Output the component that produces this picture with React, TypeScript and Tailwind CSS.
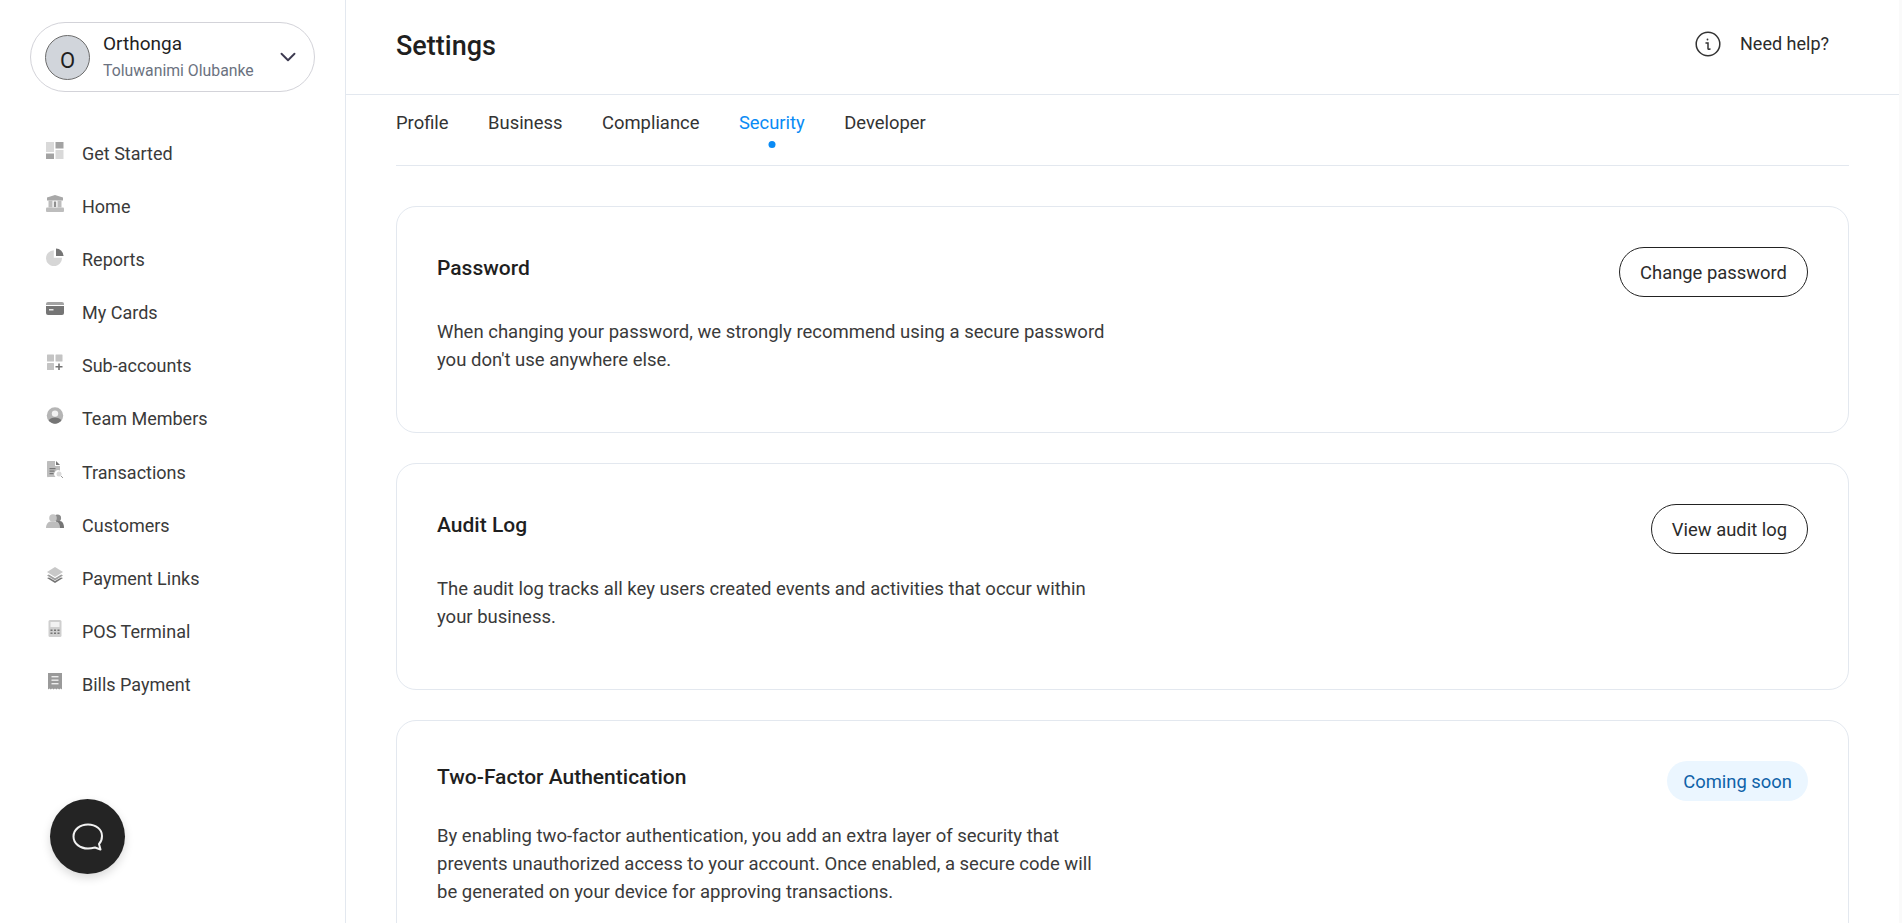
import { ChevronDown } from "lucide-react";

const navItems = [
  { label: "Get Started", icon: <GetStartedIcon /> },
  { label: "Home", icon: <HomeIcon /> },
  { label: "Reports", icon: <ReportsIcon /> },
  { label: "My Cards", icon: <CardIcon /> },
  { label: "Sub-accounts", icon: <SubAccountsIcon /> },
  { label: "Team Members", icon: <TeamIcon /> },
  { label: "Transactions", icon: <TransactionsIcon /> },
  { label: "Customers", icon: <CustomersIcon /> },
  { label: "Payment Links", icon: <LayersIcon /> },
  { label: "POS Terminal", icon: <PosIcon /> },
  { label: "Bills Payment", icon: <BillsIcon /> },
];

const tabs = ["Profile", "Business", "Compliance", "Security", "Developer"];

function GetStartedIcon() {
  return (
    <svg width="18" height="18" viewBox="0 0 18 18">
      <rect x="0" y="0" width="8" height="10" fill="#d9d9d9" />
      <rect x="9.5" y="0" width="8" height="6.5" fill="#a3a3a3" />
      <rect x="0" y="11.5" width="8" height="5.5" fill="#a3a3a3" />
      <rect x="9.5" y="8" width="8" height="9" fill="#d9d9d9" />
    </svg>
  );
}

function HomeIcon() {
  return (
    <svg width="18" height="18" viewBox="0 0 18 18">
      <path d="M9 0 17 2.5V5.5H1V2.5Z" fill="#a8a8a8" />
      <rect x="2.5" y="5.5" width="4" height="7" fill="#bdbdbd" />
      <rect x="7.8" y="6.5" width="2.4" height="5.5" fill="#8f8f8f" />
      <rect x="11.5" y="5.5" width="4" height="7" fill="#bdbdbd" />
      <rect x="0" y="12.5" width="18" height="4.5" rx="1" fill="#bdbdbd" />
    </svg>
  );
}

function ReportsIcon() {
  return (
    <svg width="18" height="18" viewBox="0 0 18 18">
      <path d="M7.8 2.2V9.8H16A8 8 0 1 1 7.8 2.2Z" fill="#d6d6d6" />
      <path d="M10 0.5A7.6 7.6 0 0 1 17.5 8H10Z" fill="#757575" />
    </svg>
  );
}

function CardIcon() {
  return (
    <svg width="18" height="18" viewBox="0 0 18 18">
      <path d="M2 1H16A2 2 0 0 1 18 3V4H0V3A2 2 0 0 1 2 1Z" fill="#a3a3a3" />
      <path d="M0 5H18V12A2 2 0 0 1 16 14H2A2 2 0 0 1 0 12Z" fill="#757575" />
      <rect x="3" y="8" width="4.5" height="1.5" fill="#e5e5e5" />
    </svg>
  );
}

function SubAccountsIcon() {
  return (
    <svg width="18" height="18" viewBox="0 0 18 18">
      <rect x="1" y="0.5" width="7" height="7" rx="0.5" fill="#c4c4c4" />
      <rect x="9.5" y="0.5" width="7" height="7" rx="0.5" fill="#c4c4c4" />
      <rect x="1" y="9" width="7" height="7" rx="0.5" fill="#c4c4c4" />
      <path d="M12.2 9.5H13.8V12H16.5V13.5H13.8V16H12.2V13.5H9.5V12H12.2Z" fill="#757575" />
    </svg>
  );
}

function TeamIcon() {
  return (
    <svg width="18" height="18" viewBox="0 0 18 18">
      <circle cx="9" cy="8.5" r="8.2" fill="#b5b5b5" />
      <circle cx="9" cy="6.6" r="3.2" fill="#f2f2f2" />
      <path d="M2.6 13.6C4 11 6.4 10.4 9 10.4S14 11 15.4 13.6A8.2 8.2 0 0 1 2.6 13.6Z" fill="#757575" />
    </svg>
  );
}

function TransactionsIcon() {
  return (
    <svg width="18" height="18" viewBox="0 0 18 18">
      <path d="M1.5 0H9V5H14V9.5A4 4 0 0 0 9.5 16H2.5A1 1 0 0 1 1 15V1A1 1 0 0 1 1.5 0Z" fill="#bdbdbd" />
      <path d="M10 0 14 4H10Z" fill="#757575" />
      <rect x="3.5" y="7" width="6" height="1.2" fill="#757575" />
      <rect x="3.5" y="9.5" width="5" height="1.2" fill="#757575" />
      <rect x="3.5" y="12" width="4" height="1.2" fill="#757575" />
      <circle cx="13" cy="13" r="2.5" fill="#d9d9d9" />
      <path d="M15 15 17 17" stroke="#9a9a9a" strokeWidth="1" />
    </svg>
  );
}

function CustomersIcon() {
  return (
    <svg width="18" height="18" viewBox="0 0 18 18">
      <circle cx="11.5" cy="4" r="3.6" fill="#8a8a8a" />
      <path d="M10 7H14C16.5 7 18 10 18 14H11Z" fill="#757575" />
      <circle cx="7" cy="4" r="3.8" fill="#c4c4c4" />
      <path d="M4.5 7.5H10C12.5 7.5 14 10.5 14 14H0C0 10.5 2 7.5 4.5 7.5Z" fill="#bdbdbd" />
    </svg>
  );
}

function LayersIcon() {
  return (
    <svg width="18" height="18" viewBox="0 0 18 18">
      <path d="M9 0 17 5 9 10 1 5Z" fill="#c8c8c8" />
      <path d="M1 8.5 2.8 7.4 9 11.2 15.2 7.4 17 8.5 9 13.5Z" fill="#a0a0a0" />
      <path d="M3 10.5 9 14 15 10.5 17 11 9 16 1 11Z" fill="#757575" />
    </svg>
  );
}

function PosIcon() {
  return (
    <svg width="18" height="18" viewBox="0 0 18 18">
      <rect x="2.5" y="0" width="13" height="17" rx="1.5" fill="#cfcfcf" />
      <rect x="4.5" y="2" width="9" height="5" fill="#f2f2f2" />
      <g fill="#757575">
        <rect x="4.5" y="9.5" width="2" height="1.5" />
        <rect x="8" y="9.5" width="2" height="1.5" />
        <rect x="11.5" y="9.5" width="2" height="1.5" />
        <rect x="4.5" y="12.5" width="2" height="1.5" />
        <rect x="8" y="12.5" width="2" height="1.5" />
        <rect x="11.5" y="12.5" width="2" height="1.5" />
      </g>
    </svg>
  );
}

function BillsIcon() {
  return (
    <svg width="18" height="18" viewBox="0 0 18 18">
      <path d="M2 0H16V16.5L14.6 15.6 13.2 16.5 11.8 15.6 10.4 16.5 9 15.6 7.6 16.5 6.2 15.6 4.8 16.5 3.4 15.6 2 16.5Z" fill="#9a9a9a" />
      <rect x="5.5" y="3" width="7" height="1.4" fill="#ededed" />
      <rect x="5.5" y="6.5" width="7" height="1.4" fill="#ededed" />
      <rect x="5.5" y="10" width="7" height="1.4" fill="#ededed" />
    </svg>
  );
}

function Card({ title, text, action, height }: { title: string; text: string; action: React.ReactNode; height: string }) {
  return (
    <div className={`border border-[#e3e8ef] rounded-[20px] pl-[40px] pr-[40px] pt-[40px] shrink-0 ${height}`}>
      <div className="flex justify-between items-center">
        <h3 className="text-[21px] leading-[28px] pb-[8px] font-medium text-[#1f1f1f]">{title}</h3>
        {action}
      </div>
      <p className="text-[18.5px] leading-[28px] text-[#3a3a3a] max-w-[672px] mt-[21px]">{text}</p>
    </div>
  );
}

function OutlineButton({ label }: { label: string }) {
  return (
    <button className="h-[50px] px-5 pt-[1px] border border-[#222] rounded-full text-[18.4px] text-[#2b2b2b] bg-white">
      {label}
    </button>
  );
}

export default function App() {
  return (
    <div className="flex h-screen overflow-hidden bg-white font-['Roboto',sans-serif]">
      <aside className="relative w-[346px] shrink-0 border-r border-[#e3e8ef] pt-[22px] px-[30px]">
        <div className="flex items-center h-[70px] w-[285px] border border-[#d3d3d9] rounded-full pl-[14px] pr-[13px]">
          <div className="w-[45px] h-[45px] rounded-full bg-[#d1d5db] border border-[#6b6b6b] flex items-center justify-center text-[22px] text-[#1f1f1f] pt-[6px]">
            O
          </div>
          <div className="ml-[13px] flex-1">
            <div className="text-[19px] leading-[22px] text-[#1f1f1f]">Orthonga</div>
            <div className="text-[15.8px] leading-[20px] mt-[6px] text-[#6b7280]">Toluwanimi Olubanke</div>
          </div>
          <ChevronDown size={26} strokeWidth={1.75} className="text-[#3d3a50]" />
        </div>
        <nav className="mt-[35px]">
          {navItems.map((item) => (
            <div key={item.label} className="flex h-[53.1px] pl-[16px]">
              <div className="w-[36px] pt-[15px]">{item.icon}</div>
              <span className="text-[18px] leading-[53px] text-[#3a3a3a]">{item.label}</span>
            </div>
          ))}
        </nav>
        <button className="absolute left-[50px] top-[799px] w-[75px] h-[75px] rounded-full bg-[#242424] flex items-center justify-center shadow-[0_4px_10px_rgba(0,0,0,0.15)]">
          <svg width="32" height="28" viewBox="0 0 32 28" fill="none" stroke="#f2f2f2" strokeWidth="2">
            <path d="M16 1.5C24 1.5 30 6.5 30 13C30 16.5 29 19 27 21L28.5 26.5L23 24.5C21 25 18.5 25.5 16 25.5C8 25.5 1.5 20.5 1.5 13.5C1.5 6.5 8 1.5 16 1.5Z" strokeLinejoin="round" />
          </svg>
        </button>
      </aside>

      <main className="flex-1 min-w-0">
        <header className="h-[95px] border-b border-[#e3e8ef] flex items-center justify-between pl-[50px] pr-[70px]">
          <h1 className="text-[27px] font-medium text-[#1f1f1f] -mt-[2px]">Settings</h1>
          <div className="flex items-center gap-[19px] -mt-[7px]">
            <svg width="26" height="26" viewBox="0 0 26 26" fill="none" stroke="#333" strokeWidth="1.5">
              <circle cx="13" cy="13" r="11.8" />
              <circle cx="12.5" cy="8.5" r="0.9" fill="#333" stroke="none" />
              <path d="M11 12H13V17.5C13 18.2 13.6 18.6 15 18" strokeLinecap="round" />
            </svg>
            <span className="text-[18px] text-[#2b2b2b]">Need help?</span>
          </div>
        </header>
        <div className="pl-[50px] pr-[50px]">
          <div className="flex gap-[39.5px] h-[71px] border-b border-[#e3e8ef] pt-[16px]">
            {tabs.map((tab) => (
              <div key={tab} className={`relative text-[18.4px] leading-[24px] ${tab === "Security" ? "text-[#0a8bf5]" : "text-[#333]"}`}>
                {tab}
                {tab === "Security" && (
                  <span className="absolute left-1/2 -translate-x-1/2 top-[30px] w-[7px] h-[7px] rounded-full bg-[#0a8bf5]" />
                )}
              </div>
            ))}
          </div>
          <div className="flex flex-col gap-[30px] mt-[40px]">
            <Card
              title="Password"
              height="h-[227px]"
              action={<OutlineButton label="Change password" />}
              text="When changing your password, we strongly recommend using a secure password you don't use anywhere else."
            />
            <Card
              title="Audit Log"
              height="h-[227px]"
              action={<OutlineButton label="View audit log" />}
              text="The audit log tracks all key users created events and activities that occur within your business."
            />
            <Card
              title="Two-Factor Authentication"
              height="h-[260px]"
              action={
                <span className="h-[40px] px-[16px] pt-[2px] rounded-full bg-[#ebf6ff] text-[#0f62a8] text-[18.4px] flex items-center">
                  Coming soon
                </span>
              }
              text="By enabling two-factor authentication, you add an extra layer of security that prevents unauthorized access to your account. Once enabled, a secure code will be generated on your device for approving transactions."
            />
          </div>
        </div>
      </main>
      <div className="w-[3px] shrink-0 bg-[#fafafa]" />
    </div>
  );
}
